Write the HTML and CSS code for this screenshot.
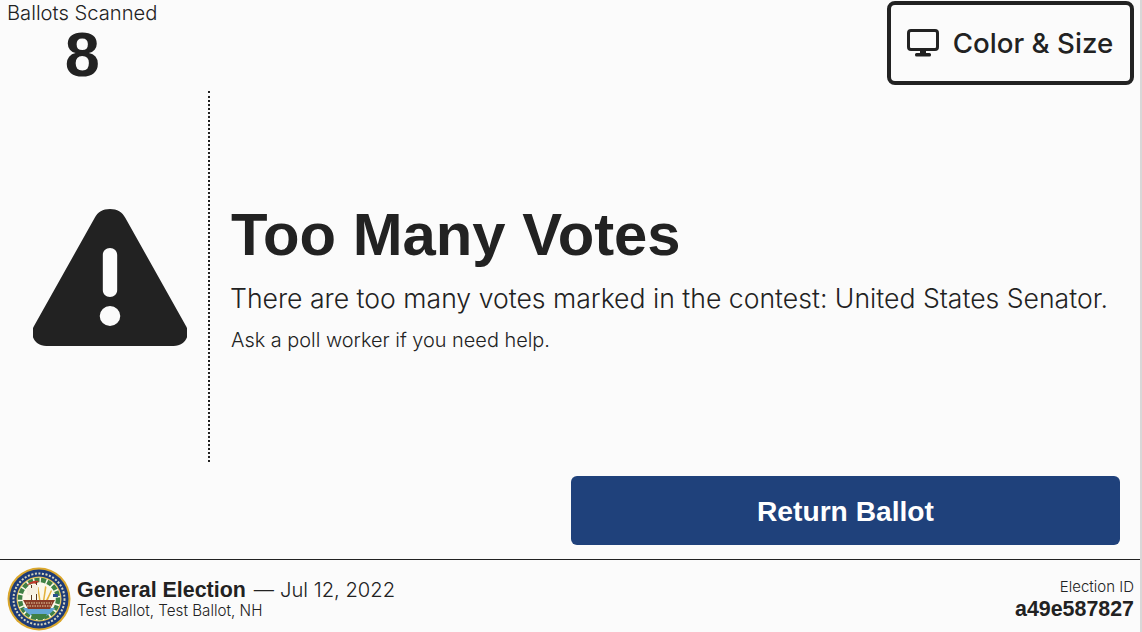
FILE: index.html
```html
<!DOCTYPE html>
<html lang="en">
	<head>
		<meta charset="UTF-8">
		<title>Too Many Votes</title>
		<link rel="stylesheet" href="styles.css">
	</head>
	<body>
		<div id="screen">
			<div class="topbar">
				<div class="scanned">
					<div class="scanned-label">Ballots Scanned</div>
					<div class="scanned-count">8</div>
				</div>
				<button class="size-button">
					<svg class="monitor" viewBox="0 0 32 28" width="32" height="28">
						<rect x="1.5" y="1.5" width="29" height="19" rx="2.5" fill="none" stroke="#222" stroke-width="3"/>
						<rect x="13" y="21" width="6" height="4" fill="#222"/>
						<rect x="8" y="24" width="16" height="3.5" rx="1.5" fill="#222"/>
					</svg>
					Color &amp; Size
				</button>
			</div>
			<div class="main">
				<div class="icon-col">
					<svg viewBox="2 0 150 137" width="154" height="137" preserveAspectRatio="none">
						<path fill="#222" fill-rule="evenodd" d="M77 0c7 0 12 3 15 9l59 108c5 9-1 20-12 20H15C4 137-2 126 3 117L62 9c3-6 8-9 15-9zM77 39c-4 0-7 3-7 7v35c0 4 3 7 7 7s7-3 7-7V46c0-4-3-7-7-7zM77 97a10 10 0 1 0 0 20a10 10 0 1 0 0-20z"/>
					</svg>
				</div>
				<div class="message">
					<h1>Too Many Votes</h1>
					<p class="detail">There are too many votes marked in the contest: United States Senator.</p>
					<p class="help">Ask a poll worker if you need help.</p>
				</div>
			</div>
			<div class="actions">
				<button class="return-button">Return Ballot</button>
			</div>
			<div class="footer">
				<svg class="seal" viewBox="0 0 64 64" width="64" height="64">
					<circle cx="32" cy="32" r="31.5" fill="#dba72c"/>
					<circle cx="32" cy="32" r="29.5" fill="#1d3b78"/>
					<circle cx="32" cy="32" r="25.5" fill="none" stroke="#d8d6bc" stroke-width="2" stroke-dasharray="2 1.6"/>
					<circle cx="32" cy="32" r="22.5" fill="#e4bd4a"/>
					<circle cx="32" cy="32" r="21.5" fill="#fbf8ea"/>
					<circle cx="32" cy="32" r="19" fill="none" stroke="#3f8044" stroke-width="4.5" stroke-dasharray="5 1.5"/>
					<path d="M16 41a18.5 18.5 0 0 0 32 0z" fill="#62a6d6"/>
					<path d="M24 47h16l-3 5h-10z" fill="#3f8044"/>
					<path d="M19 19c4-5 9-6 13-5l-3 3c-4-1-6 0-10 2z" fill="#c23a2c"/>
					<path d="M32 33l-2-13h1.500l2 13zM36 33l2-14 1.500 1-2 13zM39 33l5-10 1 1-4 9z" fill="#e3b23c"/>
					<path d="M24 18h1v16h-1zM29 15h1v19h-1z" fill="#5a3a20"/>
					<path d="M20 21h6v7h-6zM25 18h6v9h-6z" fill="#f5f0e0"/>
					<path d="M16 33h32l-5 9H21z" fill="#8a3b26"/>
					<path d="M19 36h26M20 39h24" stroke="#e8d7a8" stroke-width="1" stroke-dasharray="1.500 1"/>
					<path d="M46 27h5v3h-5z" fill="#28508f"/>
				</svg>
				<div class="election">
					<div class="election-title"><b>General Election</b><span class="dash">—</span>Jul 12, 2022</div>
					<div class="election-sub">Test Ballot, Test Ballot, NH</div>
				</div>
				<div class="election-id">
					<div class="id-label">Election ID</div>
					<div class="id-value">a49e587827</div>
				</div>
			</div>
		</div>
	</body>
</html>
```

FILE: styles.css
```css
body{
	margin:0;
	background-color:#fbfbfb;
	color:#222;
	font-family:"Liberation Sans", Arial, sans-serif;
}
#screen{
	width:1140px;
	height:632px;
	border-right:2px solid #d8d8d8;
	display:flex;
	flex-direction:column;
	overflow:hidden;
}
.topbar{
	height:91px;
	flex:none;
	display:flex;
	justify-content:space-between;
	align-items:flex-start;
	padding:1px 6px 0 7px;
	box-sizing:border-box;
}
.scanned{
	text-align:center;
}
.scanned-label{
	font-family:"Inter", sans-serif;
	font-weight:300;
	font-size:20.2px;
	line-height:24px;
}
.scanned-count{
	font-weight:bold;
	font-size:63px;
	line-height:58px;
}
.size-button{
	width:247px;
	height:84px;
	background:none;
	border:4px solid #222;
	border-radius:8px;
	color:#222;
	font-family:"Inter", sans-serif;
	font-size:27.7px;
	font-weight:500;
	display:flex;
	align-items:center;
	justify-content:center;
	gap:14px;
	padding:0 1px 0 0;
}
.monitor{
	flex:none;
}
.main{
	height:371px;
	flex:none;
	display:flex;
	align-items:center;
}
.icon-col{
	width:210px;
	height:100%;
	flex:none;
	box-sizing:border-box;
	border-right:2px dotted #222;
	display:flex;
	align-items:center;
	padding:2px 0 0 33px;
}
.message{
	padding-left:21px;
}
h1{
	margin:0;
	font-size:59.8px;
	line-height:70px;
	font-weight:bold;
}
.detail{
	margin:11px 0 0 -1px;
	font-family:"Inter", sans-serif;
	font-weight:300;
	font-size:26.6px;
	line-height:34px;
}
.help{
	margin:12px 0 0;
	font-family:"Inter", sans-serif;
	font-weight:300;
	font-size:19.9px;
	line-height:26px;
}
.actions{
	flex:1;
	display:flex;
	justify-content:flex-end;
	padding:14px 20px 0 0;
}
.return-button{
	width:549px;
	height:69px;
	background-color:#1f417b;
	color:#fff;
	border:none;
	border-radius:6px;
	font-family:"Liberation Sans", Arial, sans-serif;
	font-size:28.2px;
	font-weight:bold;
	padding:1px 0 0;
}
.footer{
	height:73px;
	flex:none;
	box-sizing:border-box;
	border-top:1px solid #222;
	display:flex;
	align-items:center;
	padding:6px 6px 0 7px;
	gap:6px;
}
.seal{
	flex:none;
}
.election{
	flex:1;
}
.election-title{
	font-family:"Inter", sans-serif;
	font-size:20.2px;
	font-weight:300;
	line-height:24px;
}
.election-title b{
	font-family:"Liberation Sans", Arial, sans-serif;
	font-size:21.4px;
	font-weight:bold;
}
.dash{
	margin:0 6px 0 8px;
}
.election-sub{
	font-family:"Inter", sans-serif;
	font-size:15.2px;
	font-weight:300;
	line-height:18px;
}
.election-id{
	text-align:right;
}
.id-label{
	font-family:"Inter", sans-serif;
	font-size:15px;
	font-weight:300;
	line-height:20px;
}
.id-value{
	font-size:21.4px;
	font-weight:bold;
	line-height:24px;
}
```
